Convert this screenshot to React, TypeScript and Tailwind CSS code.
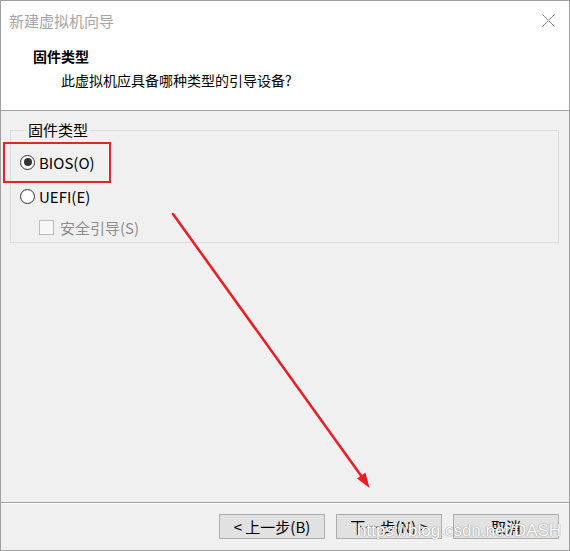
import React from 'react';

const font = { fontFamily: '"Noto Sans CJK SC", "Noto Sans", sans-serif' };

const Radio = ({ checked, label }: { checked?: boolean; label: string }) => (
  <div className="flex h-[24px] items-center">
    <span className="flex h-[15px] w-[15px] items-center justify-center rounded-full border border-[#333333] bg-white">
      {checked && <span className="h-[8px] w-[8px] rounded-full bg-[#333333]" />}
    </span>
    <span className="ml-[4px] text-[15px] leading-none text-black">{label}</span>
  </div>
);

const Button = ({ children }: { children: React.ReactNode }) => (
  <div className="flex h-[25px] w-[106px] items-center justify-center border border-[#adadad] bg-[#e1e1e1] text-[15px] leading-none text-black">
    {children}
  </div>
);

const App = () => {
  return (
    <div
      className="relative flex h-[551px] w-[570px] flex-col overflow-hidden border border-[#a0a0a0] bg-[#f0f0f0]"
      style={font}
    >
      {/* title + header */}
      <div className="h-[109px] bg-white">
        <div className="flex h-[38px] items-center justify-between pl-[8px] pr-[14px]">
          <span className="text-[15px] leading-none text-[#a5a5a5]">新建虚拟机向导</span>
          <svg width="13" height="13" viewBox="0 0 13 13" className="mt-[1px]">
            <path d="M0.5 0.5 L12.5 12.5 M12.5 0.5 L0.5 12.5" stroke="#8a8a8a" strokeWidth="1" />
          </svg>
        </div>
        <div className="pl-[32px] pt-[10px] text-[14px] font-bold leading-none text-black">固件类型</div>
        <div className="pl-[60px] pt-[10px] text-[14px] leading-none text-black">此虚拟机应具备哪种类型的引导设备?</div>
      </div>
      <div className="h-px bg-[#a0a0a0]" />

      {/* body */}
      <div className="flex-1 px-[9px] pt-[9px]">
        <fieldset className="w-[549px] border border-[#dcdcdc] pb-[3px] pl-[9px]">
          <legend className="ml-[6px] px-[2px] text-[15px] leading-[20px] text-black">固件类型</legend>
          <div className="pt-[10px]">
            <Radio checked label="BIOS(O)" />
          </div>
          <div className="pt-[10px]">
            <Radio label="UEFI(E)" />
          </div>
          <div className="box-content flex h-[24px] items-center pl-[19px] pt-[7px]">
            <span className="h-[15px] w-[15px] border border-[#bcbcbc] bg-[#f7f7f7]" />
            <span className="ml-[6px] text-[15px] leading-none text-[#8d8d8d]">安全引导(S)</span>
          </div>
        </fieldset>
      </div>

      {/* footer */}
      <div className="h-px bg-[#a0a0a0]" />
      <div className="h-px bg-white" />
      <div className="flex h-[46px] justify-end gap-[11px] pr-[10px] pt-[10px]">
        <Button>&lt; 上一步(B)</Button>
        <Button>下一步(N) &gt;</Button>
        <Button>取消</Button>
      </div>

      {/* annotations */}
      <div className="absolute left-[2px] top-[141px] h-[41px] w-[108px] border-2 border-[#e8222a]" />
      <svg className="absolute left-0 top-0" width="570" height="551" viewBox="0 0 570 551">
        <path d="M172 213 L361 476" stroke="#ec1c24" strokeWidth="2.5" strokeLinecap="round" />
        <path d="M368.5 487 L356 477.5 L364.5 471.5 Z" fill="#ec1c24" />
      </svg>
      <div className="absolute left-[356px] top-[521px] text-[17px] leading-none text-white [font-family:'Liberation_Sans',sans-serif] [text-shadow:0_0_1px_#8a8a8a,0_0_1px_#8a8a8a]">
        https://blog.csdn.net/DASH
      </div>
    </div>
  );
};

export default App;
